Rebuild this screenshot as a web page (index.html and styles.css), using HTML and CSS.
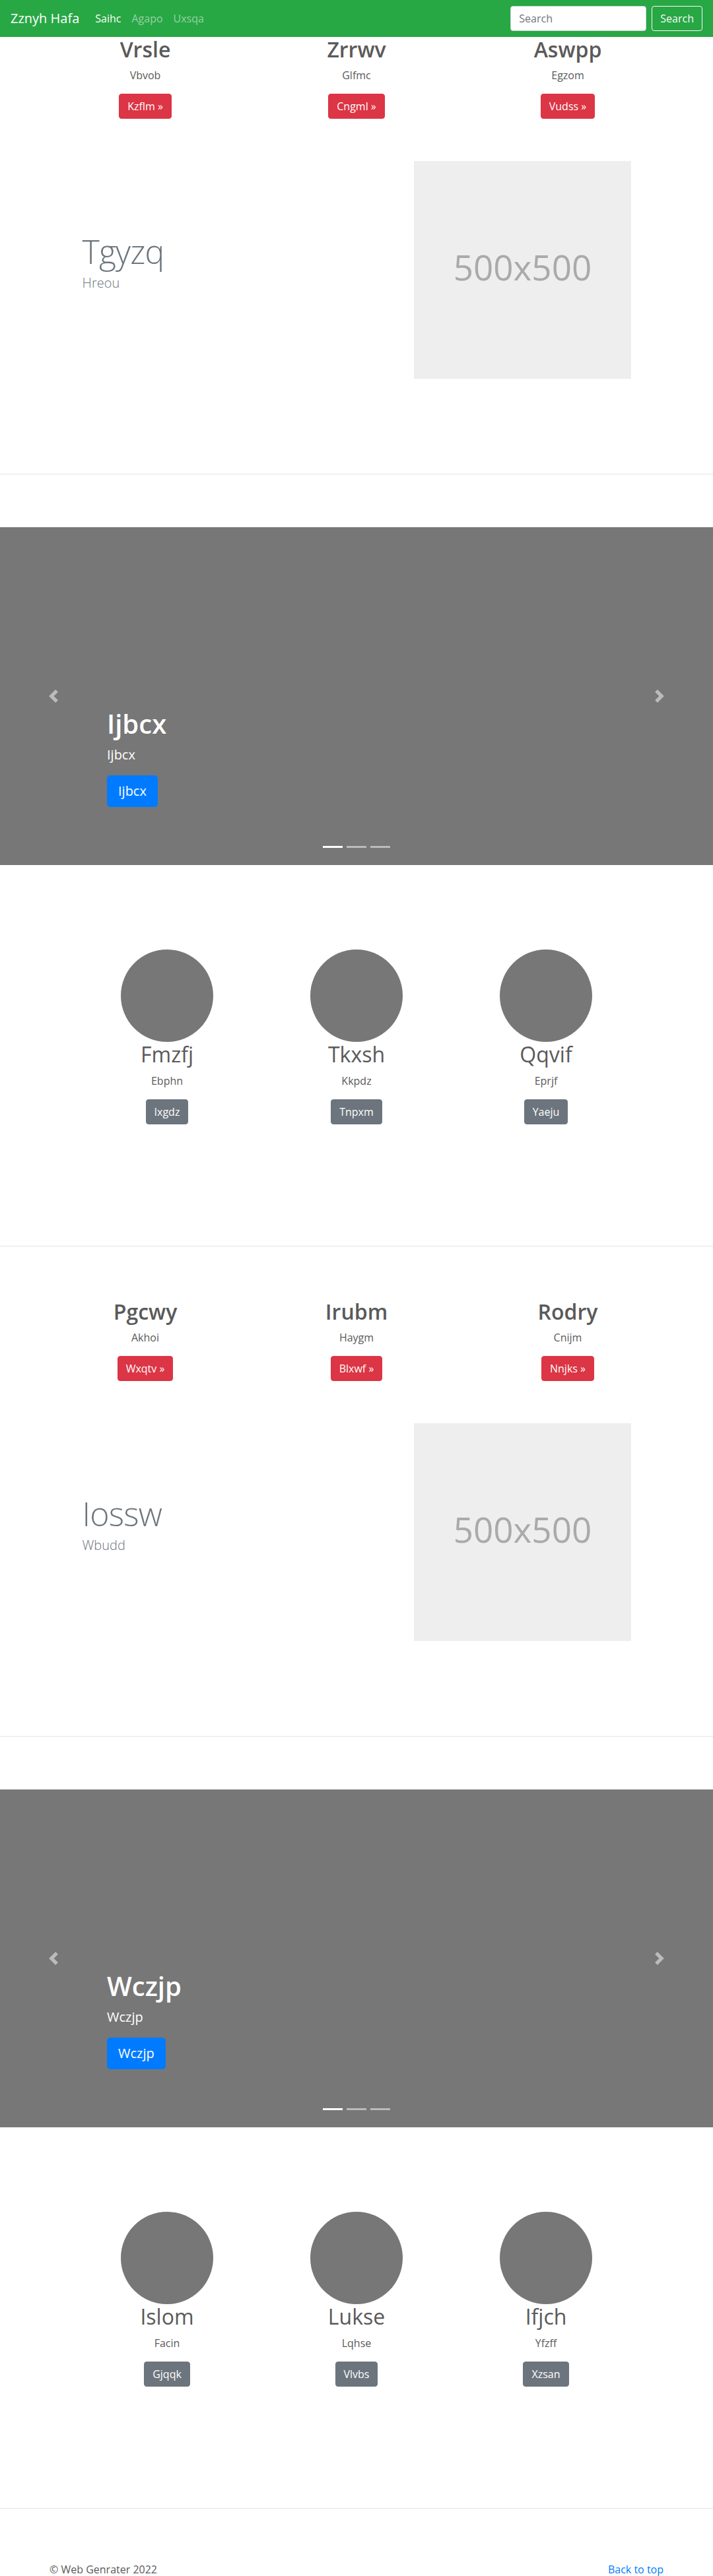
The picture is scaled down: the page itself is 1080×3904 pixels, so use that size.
FILE: index.html
```html
<!DOCTYPE html>
<html lang="en">
<head>
<meta charset="utf-8">
<title>Zznyh Hafa</title>
<link rel="stylesheet" href="styles.css">
</head>
<body>
<nav class="navbar">
  <a class="brand" href="#">Zznyh Hafa</a>
  <ul class="nav-links">
    <li><a class="nav-link active" href="#">Saihc</a></li>
    <li><a class="nav-link" href="#">Agapo</a></li>
    <li><a class="nav-link" href="#">Uxsqa</a></li>
  </ul>
  <form class="search">
    <input class="search-input" type="text" placeholder="Search">
    <button class="search-btn" type="button">Search</button>
  </form>
</nav>

<section class="marketing">
  <div class="mcol"><h2>Vrsle</h2><p>Vbvob</p><p><a class="btn btn-danger" href="#">Kzflm &raquo;</a></p></div>
  <div class="mcol"><h2>Zrrwv</h2><p>Glfmc</p><p><a class="btn btn-danger" href="#">Cngml &raquo;</a></p></div>
  <div class="mcol"><h2>Aswpp</h2><p>Egzom</p><p><a class="btn btn-danger" href="#">Vudss &raquo;</a></p></div>
</section>

<section class="feat-wrap">
  <div class="feat-row">
    <div class="feat-text">
      <h2 class="feat-heading">Tgyzq</h2>
      <p class="lead">Hreou</p>
    </div>
    <div class="feat-media">
      <svg class="ph" width="329" height="330" xmlns="http://www.w3.org/2000/svg"><rect width="100%" height="100%" fill="#eee"/><text x="50%" y="50%" dy=".3em" text-anchor="middle" fill="#aaa">500x500</text></svg>
    </div>
  </div>
</section>

<hr class="divider">

<section class="carousel">
  <a class="ctrl prev" href="#"><svg viewBox="0 0 8 8"><path fill="#fff" d="M5.25 0l-4 4 4 4 1.5-1.5L4.25 4l2.5-2.5L5.25 0z"/></svg></a>
  <a class="ctrl next" href="#"><svg viewBox="0 0 8 8"><path fill="#fff" d="M2.75 0l-1.5 1.5L3.75 4l-2.5 2.5L2.75 8l4-4-4-4z"/></svg></a>
  <div class="caption">
    <h1>Ijbcx</h1>
    <p>Ijbcx</p>
    <div class="caption-action"><a class="btn btn-lg btn-primary" href="#">Ijbcx</a></div>
  </div>
  <ol class="indicators"><li class="active"></li><li></li><li></li></ol>
</section>

<section class="circles">
  <div class="ccol"><div class="circle"></div><h2>Fmzfj</h2><p>Ebphn</p><p><a class="btn btn-secondary" href="#">Ixgdz</a></p></div>
  <div class="ccol"><div class="circle"></div><h2>Tkxsh</h2><p>Kkpdz</p><p><a class="btn btn-secondary" href="#">Tnpxm</a></p></div>
  <div class="ccol"><div class="circle"></div><h2>Qqvif</h2><p>Eprjf</p><p><a class="btn btn-secondary" href="#">Yaeju</a></p></div>
</section>

<hr class="divider">

<section class="marketing">
  <div class="mcol"><h2>Pgcwy</h2><p>Akhoi</p><p><a class="btn btn-danger" href="#">Wxqtv &raquo;</a></p></div>
  <div class="mcol"><h2>Irubm</h2><p>Haygm</p><p><a class="btn btn-danger" href="#">Blxwf &raquo;</a></p></div>
  <div class="mcol"><h2>Rodry</h2><p>Cnijm</p><p><a class="btn btn-danger" href="#">Nnjks &raquo;</a></p></div>
</section>

<section class="feat-wrap">
  <div class="feat-row">
    <div class="feat-text">
      <h2 class="feat-heading">Iossw</h2>
      <p class="lead">Wbudd</p>
    </div>
    <div class="feat-media">
      <svg class="ph" width="329" height="330" xmlns="http://www.w3.org/2000/svg"><rect width="100%" height="100%" fill="#eee"/><text x="50%" y="50%" dy=".3em" text-anchor="middle" fill="#aaa">500x500</text></svg>
    </div>
  </div>
</section>

<hr class="divider">

<section class="carousel">
  <a class="ctrl prev" href="#"><svg viewBox="0 0 8 8"><path fill="#fff" d="M5.25 0l-4 4 4 4 1.5-1.5L4.25 4l2.5-2.5L5.25 0z"/></svg></a>
  <a class="ctrl next" href="#"><svg viewBox="0 0 8 8"><path fill="#fff" d="M2.75 0l-1.5 1.5L3.75 4l-2.5 2.5L2.75 8l4-4-4-4z"/></svg></a>
  <div class="caption">
    <h1>Wczjp</h1>
    <p>Wczjp</p>
    <div class="caption-action"><a class="btn btn-lg btn-primary" href="#">Wczjp</a></div>
  </div>
  <ol class="indicators"><li class="active"></li><li></li><li></li></ol>
</section>

<section class="circles">
  <div class="ccol"><div class="circle"></div><h2>Islom</h2><p>Facin</p><p><a class="btn btn-secondary" href="#">Gjqqk</a></p></div>
  <div class="ccol"><div class="circle"></div><h2>Lukse</h2><p>Lqhse</p><p><a class="btn btn-secondary" href="#">Vlvbs</a></p></div>
  <div class="ccol"><div class="circle"></div><h2>Ifjch</h2><p>Yfzff</p><p><a class="btn btn-secondary" href="#">Xzsan</a></p></div>
</section>

<hr class="divider">

<footer class="footer">
  <p class="top-link"><a href="#">Back to top</a></p>
  <p>&copy; Web Genrater 2022</p>
</footer>
</body>
</html>
```

FILE: styles.css
```css
* { box-sizing: border-box; }

body {
  margin: 0;
  font-family: "Open Sans", "Noto Sans", sans-serif;
  font-size: 16px;
  line-height: 1.5;
  color: #5a5a5a;
  background: #fff;
}

h1, h2, p { margin: 0; }
a { text-decoration: none; }

/* Navbar */
.navbar {
  display: flex;
  align-items: center;
  height: 56px;
  padding: 0 16px;
  background: #28a745;
}
.brand {
  font-size: 20px;
  line-height: 30px;
  color: #fff;
  margin-right: 16px;
}
.nav-links {
  display: flex;
  list-style: none;
  margin: 0;
  padding: 0;
}
.nav-link {
  display: block;
  padding: 0 8px;
  color: rgba(255, 255, 255, .5);
}
.nav-link.active { color: #fff; }
.search {
  display: flex;
  gap: 8px;
  margin: 0 0 0 auto;
}
.search-input {
  width: 206px;
  height: 38px;
  padding: 6px 12px;
  border: 1px solid #ced4da;
  border-radius: 4px;
  font: inherit;
  color: #495057;
  background: #fff;
}
.search-input::placeholder { color: #6c757d; }
.search-btn {
  height: 38px;
  padding: 6px 12px;
  border: 1px solid #f8f9fa;
  border-radius: 4px;
  background: transparent;
  color: #f8f9fa;
  font: inherit;
}

/* Buttons */
.btn {
  display: inline-block;
  vertical-align: middle;
  padding: 6px 12px;
  border: 1px solid transparent;
  border-radius: 4px;
  font-size: 16px;
  line-height: 24px;
  color: #fff;
}
.btn-danger { background: #dc3545; border-color: #dc3545; }
.btn-secondary { background: #6c757d; border-color: #6c757d; }
.btn-primary { background: #007bff; border-color: #007bff; }
.btn-lg {
  padding: 8px 16px;
  font-size: 20px;
  line-height: 30px;
  border-radius: 4.8px;
}

/* Marketing columns */
.marketing {
  width: 960px;
  margin: 0 auto;
  display: grid;
  grid-template-columns: repeat(3, 1fr);
}
.mcol {
  padding: 0 15px;
  margin-bottom: 24px;
  text-align: center;
}
.mcol h2 {
  font-size: 32px;
  line-height: 38.4px;
  font-weight: 600;
  margin-bottom: 8px;
}
.mcol p { margin-bottom: 16px; }

/* Featurette */
.feat-wrap { padding: 24px 0 64px; }
.feat-row {
  width: 861px;
  margin: 0 auto;
  display: grid;
  grid-template-columns: 7fr 5fr;
}
.feat-text, .feat-media { padding: 0 15px; }
.feat-heading {
  margin: 112px 0 8px;
  font-size: 50px;
  line-height: 1;
  font-weight: 300;
  letter-spacing: -0.8px;
  color: #6c757d;
}
.lead {
  font-size: 20px;
  line-height: 30px;
  font-weight: 300;
  color: #6c757d;
}
.ph {
  display: block;
  margin: 0 auto;
  font-size: 53px;
}

/* Divider */
.divider {
  height: 0;
  margin: 80px 0;
  border: 0;
  border-top: 1px solid rgba(0, 0, 0, .1);
}

/* Carousel */
.carousel {
  position: relative;
  height: 512px;
  margin-bottom: 64px;
  background: #777;
}
.ctrl {
  position: absolute;
  top: 0;
  bottom: 0;
  width: 15%;
  display: flex;
  align-items: center;
  justify-content: center;
  opacity: .5;
}
.ctrl.prev { left: 0; }
.ctrl.next { right: 0; }
.ctrl svg { display: block; width: 20px; height: 20px; }
.caption {
  position: absolute;
  left: 15%;
  right: 15%;
  bottom: 88px;
  color: #fff;
}
.caption h1 {
  font-size: 40px;
  line-height: 48px;
  font-weight: 600;
  margin-bottom: 8px;
}
.caption p {
  font-size: 20px;
  line-height: 30px;
  margin-bottom: 16px;
}
.caption-action { display: flex; }
.indicators {
  position: absolute;
  left: 15%;
  right: 15%;
  bottom: 16px;
  display: flex;
  justify-content: center;
  list-style: none;
  margin: 0;
  padding: 0;
}
.indicators li {
  box-sizing: content-box;
  width: 30px;
  height: 3px;
  margin: 0 3px;
  border-top: 10px solid transparent;
  border-bottom: 10px solid transparent;
  background: #fff;
  background-clip: padding-box;
  opacity: .5;
}
.indicators li.active { opacity: 1; }

/* Circles */
.circles {
  width: 861px;
  margin: 0 auto;
  padding: 64px 0;
  display: grid;
  grid-template-columns: repeat(3, 1fr);
}
.ccol {
  padding: 0 15px;
  margin-bottom: 24px;
  text-align: center;
}
.circle {
  width: 140px;
  height: 140px;
  margin: 0 auto;
  border-radius: 50%;
  background: #777;
}
.ccol h2 {
  font-size: 32px;
  line-height: 38.4px;
  font-weight: 400;
  margin-bottom: 8px;
}
.ccol p { margin: 0 12px 16px; }

/* Footer */
.footer {
  width: 960px;
  margin: 0 auto;
  padding: 0 15px;
}
.footer p { margin-bottom: 16px; }
.footer a { color: #007bff; }
.top-link { float: right; }
```
